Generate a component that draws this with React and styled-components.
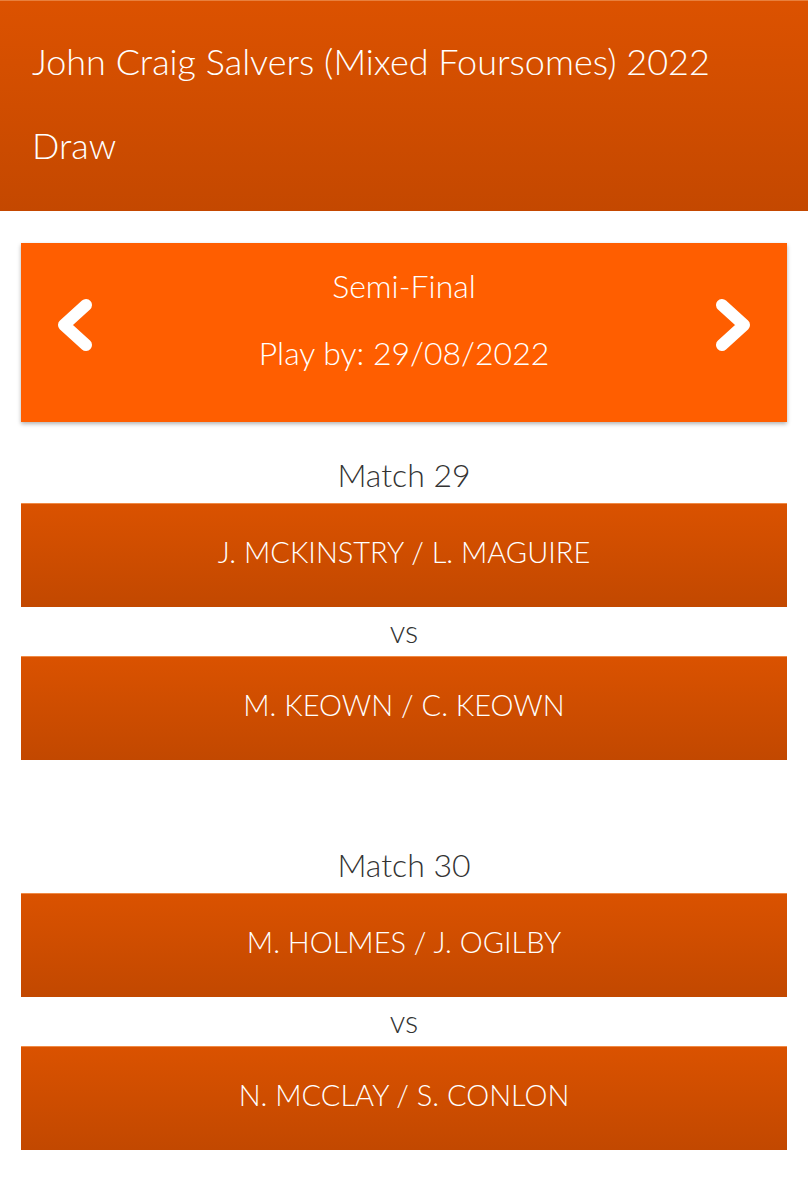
import React from 'react';
import styled, { createGlobalStyle } from 'styled-components';

const GlobalStyle = createGlobalStyle`
	body {
		margin: 0;
		background: #ffffff;
		font-family: Lato, 'Open Sans', sans-serif;
		font-weight: 300;
	}
`;

const matches = [
	{ id: 29, home: 'J. MCKINSTRY / L. MAGUIRE', away: 'M. KEOWN / C. KEOWN' },
	{ id: 30, home: 'M. HOLMES / J. OGILBY', away: 'N. MCCLAY / S. CONLON' },
];

const Chevron = ({ dir }) => (
	<svg width='40' height='54' viewBox='0 0 40 54'>
		<polyline
			points={dir === 'left' ? '31,7 9,27 31,47' : '9,7 31,27 9,47'}
			fill='none'
			stroke='#fff'
			strokeWidth='12'
			strokeLinecap='round'
			strokeLinejoin='round'
		/>
	</svg>
);

const App = () => {
	return (
		<>
			<GlobalStyle />
			<Header>
				<HeaderLine>John Craig Salvers (Mixed Foursomes) 2022</HeaderLine>
				<HeaderLine>Draw</HeaderLine>
			</Header>
			<Content>
				<RoundCard>
					<NavButton>
						<Chevron dir='left' />
					</NavButton>
					<RoundInfo>
						<RoundLine>Semi-Final</RoundLine>
						<RoundLine>Play by: 29/08/2022</RoundLine>
					</RoundInfo>
					<NavButton>
						<Chevron dir='right' />
					</NavButton>
				</RoundCard>
				{matches.map((m) => (
					<Match key={m.id}>
						<MatchTitle>Match {m.id}</MatchTitle>
						<Team>{m.home}</Team>
						<Versus>vs</Versus>
						<Team>{m.away}</Team>
					</Match>
				))}
			</Content>
		</>
	);
};

const Header = styled.header`
	background: linear-gradient(to bottom, #dc5200, #c44800);
	border-top: 1px solid #e8803d;
	padding: 18px 32px 24px;
	color: #fff;
`;

const HeaderLine = styled.div`
	font-size: 36px;
	line-height: 84px;
	white-space: nowrap;
`;

const Content = styled.main`
	padding: 32px 21px 40px;
`;

const RoundCard = styled.div`
	display: flex;
	align-items: center;
	justify-content: space-between;
	height: 179px;
	padding: 0 34px;
	background: #ff5e00;
	box-shadow: 0 2px 4px rgba(0, 0, 0, 0.3);
	color: #fff;
`;

const NavButton = styled.div`
	display: flex;
	align-items: center;
	margin-bottom: 16px;
	cursor: pointer;
`;

const RoundInfo = styled.div`
	display: flex;
	flex-direction: column;
	align-items: center;
	gap: 13px;
	padding-bottom: 26px;
`;

const RoundLine = styled.div`
	font-size: 32px;
	line-height: 54px;
`;

const Match = styled.section`
	& + & {
		margin-top: 77px;
	}
	&:first-of-type {
		margin-top: 25px;
	}
`;

const MatchTitle = styled.div`
	text-align: center;
	font-size: 32px;
	line-height: 56px;
	color: #333;
`;

const Team = styled.div`
	height: 104px;
	display: flex;
	align-items: center;
	justify-content: center;
	padding-bottom: 9px;
	background: linear-gradient(to bottom, #da5200, #c24800);
	border-top: 1px solid #f08a45;
	box-sizing: border-box;
	color: #fff;
	font-size: 29px;
`;

const Versus = styled.div`
	text-align: center;
	font-size: 31px;
	line-height: 49px;
	color: #333;
`;

export default App;
